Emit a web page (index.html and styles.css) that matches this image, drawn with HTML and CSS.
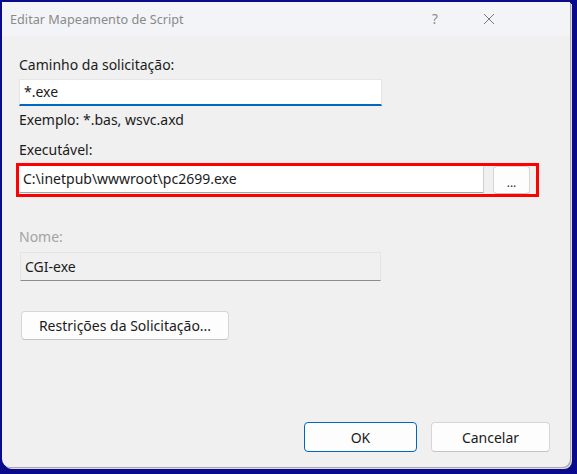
FILE: index.html
```html
<!DOCTYPE html>
<html lang="pt">
<head>
  <meta charset="UTF-8" />
  <title>Editar Mapeamento de Script</title>
  <link rel="stylesheet" href="styles.css">
</head>
<body>
  <div class="dialog">
    <div class="titlebar">
      <span class="title">Editar Mapeamento de Script</span>
      <span class="help">?</span>
      <span class="close">
        <svg width="12" height="12" viewBox="0 0 12 12"><path d="M1 1L11 11M11 1L1 11" stroke="#7a7a7a" stroke-width="1" fill="none"/></svg>
      </span>
    </div>
    <div class="content">
      <div class="label l-path">Caminho da solicitação:</div>
      <div class="input focus">*.exe</div>
      <div class="label l-example">Exemplo: *.bas, wsvc.axd</div>
      <div class="label l-exec">Executável:</div>
      <div class="highlight">
        <div class="input exec">C:\inetpub\wwwroot\pc2699.exe</div>
        <div class="btn browse">...</div>
      </div>
      <div class="label l-name disabled">Nome:</div>
      <div class="input readonly">CGI-exe</div>
      <div class="btn restrict">Restrições da Solicitação...</div>
      <div class="footer">
        <div class="btn ok">OK</div>
        <div class="btn cancel">Cancelar</div>
      </div>
    </div>
  </div>
</body>
</html>
```

FILE: styles.css
```css
html, body { margin: 0; height: 100%; }
body { background-color: #0a0a8c; padding: 2px 0 0 2px; box-sizing: border-box; font-family: "Noto Sans", sans-serif; font-size: 14px; color: #1b1b1b; overflow: hidden; }
.dialog { width: 568px; height: 465px; background-color: #f0f0f0; border-radius: 0 0 8px 8px; box-shadow: 1px 1px 0 #a9a9a9, 2px 2px 0 #dcdcdc; display: flex; flex-direction: column; }
.titlebar { height: 34px; background-color: #f3f4f7; display: flex; align-items: center; padding-left: 8px; color: #8a8a8a; flex-shrink: 0; font-size: 12.7px; }
.title { flex: 1; }
.help { width: 14px; margin-right: 41px; font-size: 13.5px; text-align: center; }
.close { width: 12px; margin-right: 75px; display: flex; }
.content { flex: 1; display: flex; flex-direction: column; padding-left: 17px; }
.label { line-height: 16px; height: 16px; }
.l-path { margin-top: 21px; }
.l-example { margin-top: 6px; }
.l-exec { margin-top: 14px; }
.l-name { margin-top: 32px; }
.disabled { color: #a3a3a3; }
.input { box-sizing: border-box; height: 27px; line-height: 24px; padding-left: 4px; background-color: #fff; border: 1px solid #e6e6e6; }
.focus { width: 363px; margin-top: 6px; border-bottom: 2px solid #0067c0; }
.highlight { margin-top: 5px; margin-left: -3px; width: 523px; height: 34px; box-sizing: border-box; border: 3px solid #ff0000; display: flex; align-items: flex-start; }
.exec { width: 465px; border-color: #fff; border-right-color: #cfcfcf; border-bottom-color: #a5a5a5; padding-left: 3px; }
.btn { box-sizing: border-box; background-color: #fdfdfd; border: 1px solid #d6d6d6; border-bottom-color: #c2c2c2; border-radius: 4px; display: flex; align-items: center; justify-content: center; }
.browse { width: 37px; height: 28px; margin-left: 9px; color: #333; font-size: 12px; padding-top: 4px; }
.readonly { width: 361px; height: 29px; line-height: 27px; margin-top: 7px; margin-left: 1px; background-color: #f0f0f0; border-color: #e4e4e4; border-bottom-color: #8c8c8c; }
.restrict { width: 208px; height: 29px; margin-top: 30px; margin-left: 2px; }
.footer { margin-top: auto; margin-bottom: 15px; display: flex; justify-content: flex-end; gap: 14px; padding-right: 20px; }
.ok { width: 113px; height: 30px; border: 1px solid #0067c0; }
.cancel { width: 119px; height: 30px; }
```
